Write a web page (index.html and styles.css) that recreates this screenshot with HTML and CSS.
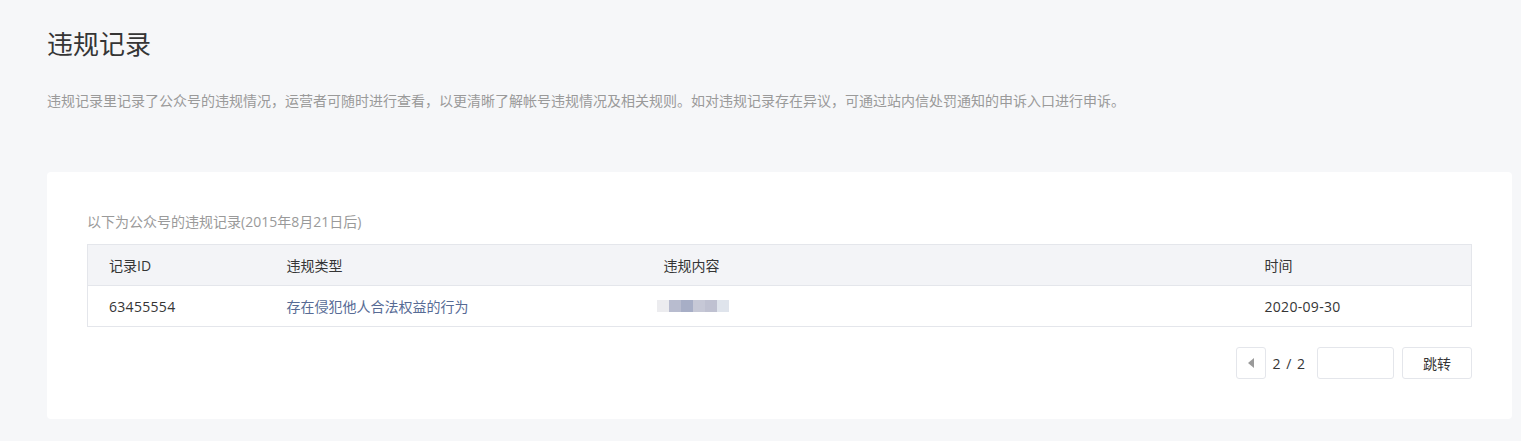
FILE: index.html
```html
<!DOCTYPE html>
<html lang="zh-CN">
<head>
    <meta charset="UTF-8">
    <title>违规记录</title>
    <link rel="stylesheet" href="styles.css">
</head>
<body>
<div class="page">
    <h2 class="page-title">违规记录</h2>
    <p class="page-desc">违规记录里记录了公众号的违规情况，运营者可随时进行查看，以更清晰了解帐号违规情况及相关规则。如对违规记录存在异议，可通过站内信处罚通知的申诉入口进行申诉。</p>

    <div class="card">
        <p class="card-tips">以下为公众号的违规记录(2015年8月21日后)</p>
        <table class="record-table">
            <thead>
            <tr>
                <th class="col-id">记录ID</th>
                <th class="col-type">违规类型</th>
                <th class="col-content">违规内容</th>
                <th class="col-time">时间</th>
            </tr>
            </thead>
            <tbody>
            <tr>
                <td>63455554</td>
                <td><a href="#" class="type-link">存在侵犯他人合法权益的行为</a></td>
                <td>
                    <span class="mosaic">
                        <i style="background:#ececef"></i><i style="background:#b8bccf"></i><i style="background:#a7aec6"></i><i style="background:#c6c8d6"></i><i style="background:#bfc1d1"></i><i style="background:#dfe4ec"></i>
                    </span>
                </td>
                <td>2020-09-30</td>
            </tr>
            </tbody>
        </table>

        <div class="pager">
            <a href="#" class="pager-btn pager-prev"><span class="arrow-left"></span></a>
            <span class="pager-num">2 / 2</span>
            <input type="text" class="pager-input">
            <a href="#" class="pager-btn pager-go">跳转</a>
        </div>
    </div>
</div>
</body>
</html>
```

FILE: styles.css
```css
*{
    margin: 0;
    padding: 0;
    box-sizing: border-box;
}
body{
    background: #f6f7f9;
    font-family: "Open Sans", "Noto Sans CJK SC", sans-serif;
    font-size: 14px;
    color: #353535;
}
a{
    text-decoration: none;
}
.page{
    padding: 24px 9px 22px 47px;
}
.page-title{
    font-size: 26px;
    font-weight: 400;
    line-height: 40px;
    color: #353535;
}
.page-desc{
    margin-top: 26px;
    line-height: 22px;
    color: #9a9a9a;
}
.card{
    margin-top: 60px;
    background: #fff;
    border-radius: 4px;
    padding: 40px 40px 40px;
}
.card-tips{
    line-height: 20px;
    color: #9a9a9a;
}
.record-table{
    width: 100%;
    margin-top: 12px;
    border-collapse: collapse;
    table-layout: fixed;
    border: 1px solid #e4e6eb;
}
.record-table th,
.record-table td{
    height: 41px;
    padding: 0 21px;
    text-align: left;
    font-weight: 400;
    border-bottom: 1px solid #e4e6eb;
}
.record-table th{
    background: #f3f4f7;
}
.record-table td{
    letter-spacing: 0.3px;
}
.col-id{
    width: 178px;
}
.col-type{
    width: 377px;
}
.col-content{
    width: 601px;
}
.type-link{
    color: #576b95;
    letter-spacing: 0;
}
.mosaic{
    display: flex;
    margin-left: -7px;
}
.mosaic i{
    width: 12px;
    height: 12px;
}
.pager{
    display: flex;
    justify-content: flex-end;
    align-items: center;
    margin-top: 20px;
}
.pager-btn{
    display: flex;
    align-items: center;
    justify-content: center;
    height: 32px;
    border: 1px solid #e4e6eb;
    border-radius: 3px;
    color: #353535;
    background: #fff;
}
.pager-prev{
    width: 30px;
}
.arrow-left{
    width: 0;
    height: 0;
    border-top: 5px solid transparent;
    border-bottom: 5px solid transparent;
    border-right: 6px solid #9a9a9a;
}
.pager-num{
    margin: 0 12px 0 7px;
    word-spacing: 2px;
}
.pager-input{
    width: 77px;
    height: 32px;
    border: 1px solid #e4e6eb;
    border-radius: 3px;
    outline: none;
}
.pager-go{
    width: 70px;
    margin-left: 8px;
}
```
